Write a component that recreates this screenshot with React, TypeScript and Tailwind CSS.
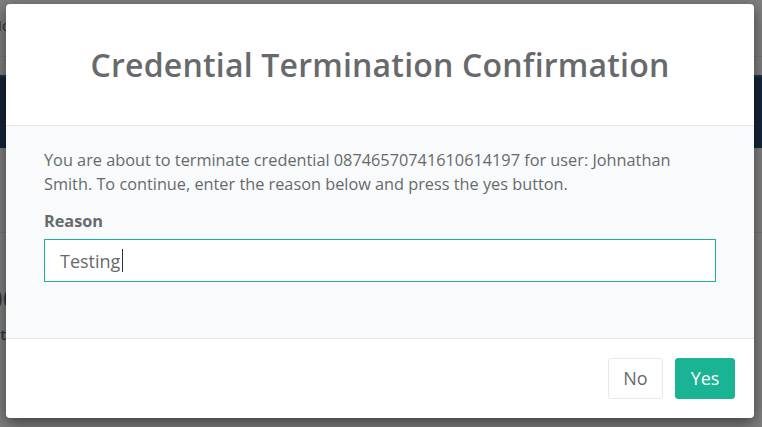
import { useState } from "react";

const FONT = { fontFamily: '"Open Sans", "Noto Sans", Arial, sans-serif' };

export default function App() {
  const [reason, setReason] = useState("Testing");

  return (
    <div className="relative h-[427px] w-[762px] overflow-hidden bg-white" style={FONT}>
      {/* page behind the backdrop */}
      <div className="flex flex-col text-[#676a6c]">
        <div className="h-[57px] border-b border-[#e7eaec] pt-[14px] text-[15px] -ml-[9px]">Home</div>
        <div className="h-[18px]" />
        <div className="h-[73px] bg-[#2a4b73] border-t-2 border-[#3d6a9a]" />
        <div className="h-[84px]" />
        <div className="h-px bg-[#e7eaec]" />
        <div className="pt-[52px] -ml-[12px] text-[26px] leading-none">00</div>
        <div className="pt-[12px] -ml-[8px] text-[15px] font-semibold">Status</div>
      </div>

      {/* backdrop */}
      <div className="absolute inset-0 bg-black/50" />

      {/* modal */}
      <div className="absolute left-[6px] top-[4px] w-[748px] overflow-hidden rounded-[4px] bg-white shadow-[0_5px_15px_rgba(0,0,0,0.5)]">
        <div className="flex h-[122px] items-center justify-center border-b border-[#e5e5e5]">
          <h4 className="text-[32px] font-semibold text-[#676a6c] tracking-[0.2px]">
            Credential Termination Confirmation
          </h4>
        </div>
        <div className="bg-[#f8fafb] px-[38px] pt-[22px] pb-[56px] text-[16.3px] leading-[24px] text-[#676a6c]">
          <p>
            You are about to terminate credential 08746570741610614197 for user: Johnathan Smith. To
            continue, enter the reason below and press the yes button.
          </p>
          <label className="mt-[13px] block font-bold leading-[25px]">Reason</label>
          <div className="relative mt-[5px]">
            <input
              value={reason}
              onChange={(e) => setReason(e.target.value)}
              className="block h-[43px] w-full border border-[#1ab394] bg-white px-[15px] text-[18px] text-[#676a6c] caret-transparent outline-none"
              style={FONT}
            />
            {/* text caret */}
            <span className="pointer-events-none absolute left-[78px] top-[10px] h-[23px] w-px bg-[#333]" />
          </div>
        </div>
        <div className="flex h-[80px] items-center justify-end gap-[12px] border-t border-[#e5e5e5] px-[19px]">
          <button className="h-[41px] w-[55px] rounded-[3px] border border-[#e7eaec] bg-white text-[18px] text-[#676a6c]">
            No
          </button>
          <button className="h-[41px] w-[60px] rounded-[3px] border border-[#1ab394] bg-[#1ab394] text-[18px] text-white">
            Yes
          </button>
        </div>
      </div>
    </div>
  );
}
